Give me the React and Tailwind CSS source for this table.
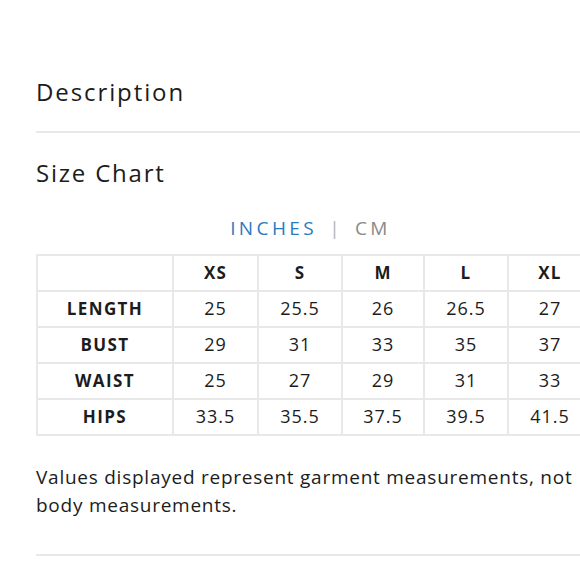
import React from 'react';

const sizes = ['XS', 'S', 'M', 'L', 'XL'];

const rows = [
    { label: 'LENGTH', values: ['25', '25.5', '26', '26.5', '27'] },
    { label: 'BUST', values: ['29', '31', '33', '35', '37'] },
    { label: 'WAIST', values: ['25', '27', '29', '31', '33'] },
    { label: 'HIPS', values: ['33.5', '35.5', '37.5', '39.5', '41.5'] },
];

const colWidths = ['w-[136px]', 'w-[85px]', 'w-[84px]', 'w-[82px]', 'w-[84px]', 'w-[84px]'];

const App = () => {
    return (
        <div className="w-[580px] h-[580px] overflow-hidden bg-white text-[#1c1c1c]" style={{ fontFamily: '"Open Sans", "Liberation Sans", sans-serif' }}>
            <div className="pl-9 pt-[74px]">
                <h2 className="text-[24px] leading-[36px] tracking-[1.9px] font-normal">Description</h2>
                <div className="mt-[21px] h-[2px] bg-[#e8e8e8]" />
                <h2 className="mt-[22px] text-[24px] leading-[36px] tracking-[1.8px] font-normal">Size Chart</h2>

                <div className="mt-[23px] flex items-center justify-center w-[549px] text-[19px] tracking-[3.4px]">
                    <span className="text-[#2a7ac0]">INCHES</span>
                    <span className="mx-3 text-[#b5b5b5]">|</span>
                    <span className="text-[#8a8a8a]">CM</span>
                </div>

                <table className="mt-[11px] border-collapse w-[555px] table-fixed text-[18px] tracking-[1px]">
                    <thead>
                        <tr className="h-[36px]">
                            <th className={`${colWidths[0]} border-2 border-[#e8e8e8]`}></th>
                            {sizes.map((s, i) => (
                                <th key={s} className={`${colWidths[i + 1]} border-2 border-[#e8e8e8] font-bold text-[17px] tracking-[1.2px]`}>{s}</th>
                            ))}
                        </tr>
                    </thead>
                    <tbody>
                        {rows.map(row => (
                            <tr key={row.label} className="h-[36px]">
                                <td className="border-2 border-[#e8e8e8] text-center font-bold text-[17px] tracking-[1.4px]">{row.label}</td>
                                {row.values.map((v, i) => (
                                    <td key={i} className="border-2 border-[#e8e8e8] text-center">{v}</td>
                                ))}
                            </tr>
                        ))}
                    </tbody>
                </table>

                <p className="mt-[27px] text-[19px] leading-[28px] tracking-[0.75px] w-[544px]">
                    Values displayed represent garment measurements, not body measurements.
                </p>
                <div className="mt-[35px] h-[2px] bg-[#e8e8e8]" />
            </div>
        </div>
    );
};

export default App;
